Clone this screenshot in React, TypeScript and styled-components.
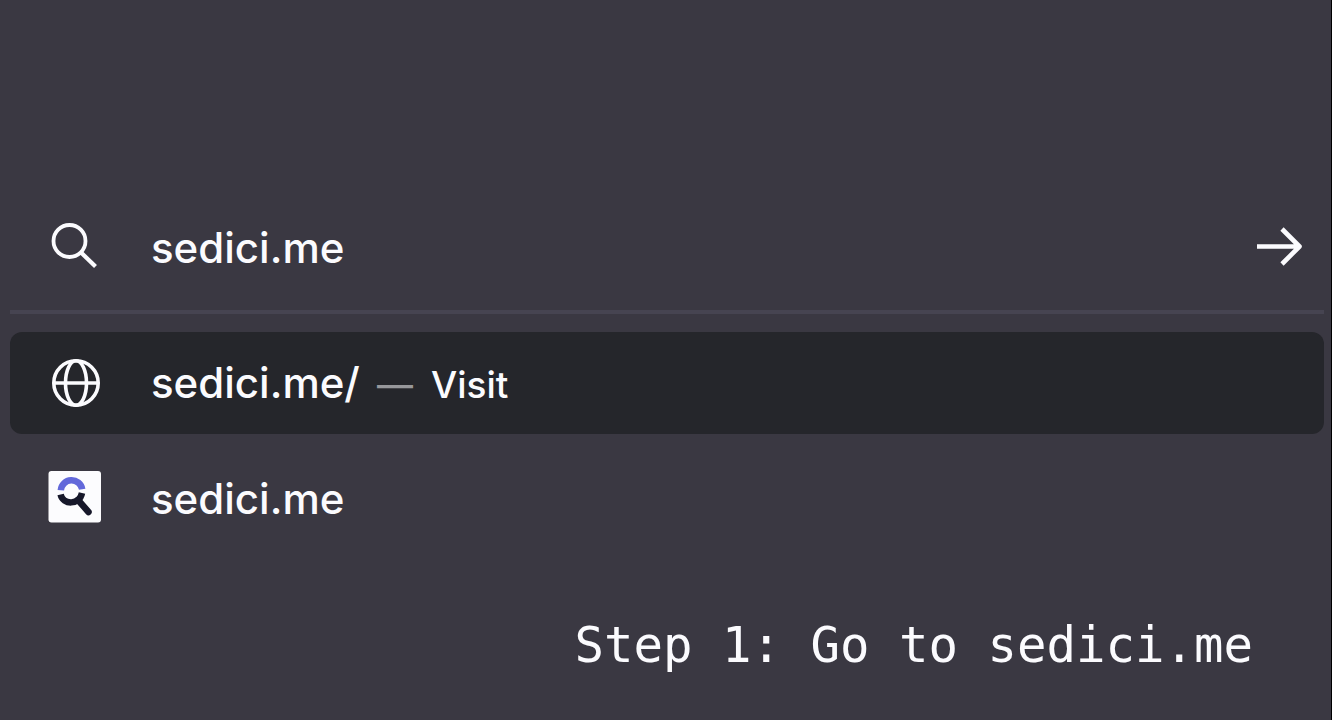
import React from "react";
import styled, { createGlobalStyle } from "styled-components";

const GlobalStyle = createGlobalStyle`
  * { box-sizing: border-box; }
  body { margin: 0; background: #3a3842; }
`;

const Page = styled.main`
  display: flex;
  flex-direction: column;
  min-height: 100vh;
  padding: 184px 7px 0 10px;
  border-right: 1px solid #000;
  background: #3a3842;
  color: #fbfbfe;
  font-family: Inter, "Liberation Sans", sans-serif;
`;

const SearchBar = styled.form`
  display: flex;
  align-items: center;
  height: 130px;
  padding: 0 20px 0 38px;
  border-bottom: 4px solid #464451;
`;

const IconSlot = styled.span`
  display: flex;
  flex: none;
  width: 103px;
`;

const Field = styled.input`
  flex: 1;
  min-width: 0;
  height: 60px;
  padding: 0;
  border: 0;
  outline: 0;
  background: transparent;
  color: inherit;
  font-family: inherit;
  font-size: 42px;
  font-weight: 500;
`;

const GoButton = styled.button`
  display: flex;
  padding: 0;
  border: 0;
  background: transparent;
  color: inherit;
`;

const Suggestions = styled.nav`
  display: flex;
  flex-direction: column;
  gap: 13px;
  padding-top: 18px;
`;

const Suggestion = styled.a<{ $active?: boolean }>`
  display: flex;
  align-items: center;
  height: 102px;
  padding: 0 38px;
  border-radius: 12px;
  background: ${(p) => (p.$active ? "#25262b" : "transparent")};
  color: inherit;
  text-decoration: none;
`;

const Label = styled.span`
  display: flex;
  align-items: baseline;
  padding-top: 2px;
  font-size: 42px;
  font-weight: 500;
  line-height: 60px;
`;

const Dash = styled.span`
  margin: 0 18px 0 17px;
  color: #97979b;
  font-size: 36px;
`;

const Action = styled.span`
  font-size: 37px;
`;

const Caption = styled.p`
  margin: 67px 71px 0 0;
  font-family: "DejaVu Sans Mono", monospace;
  font-size: 49px;
  line-height: 60px;
  text-align: right;
`;

const SearchIcon = () => (
  <svg width="54" height="54" viewBox="0 0 54 54" fill="none" stroke="currentColor" strokeWidth="3.800" aria-hidden="true">
    <circle cx="21.500" cy="21" r="16" />
    <path d="M33 32.500 47.500 46.500" strokeWidth="4.200" />
  </svg>
);

const ArrowIcon = () => (
  <svg width="50" height="50" viewBox="0 0 50 50" fill="none" stroke="currentColor" strokeWidth="4.600" aria-hidden="true">
    <path d="M3 24.500H46M28 7 45.500 24.500 28 42" strokeLinejoin="round" />
  </svg>
);

const GlobeIcon = () => (
  <svg width="54" height="54" viewBox="0 0 54 54" fill="none" stroke="currentColor" strokeWidth="3.600" aria-hidden="true">
    <circle cx="28" cy="27" r="22.200" />
    <ellipse cx="28" cy="27" rx="10.500" ry="22.200" />
    <path d="M6 27H50" />
  </svg>
);

const SiteIcon = () => (
  <svg width="54" height="54" viewBox="0 0 54 54" fill="none" aria-hidden="true">
    <rect x="0.500" y="0" width="52.500" height="51.500" rx="3" fill="#fcfcfe" />
    <path d="M12.800 19.200A10.800 10.800 0 0 1 34.200 18.200" stroke="#6268da" strokeWidth="6.500" />
    <path d="M12.600 23.500C15 34 31.500 34.500 34 22" stroke="#17182a" strokeWidth="6.500" />
    <path d="M30 29 40.500 41" stroke="#17182a" strokeWidth="6.500" strokeLinecap="round" />
  </svg>
);

export default function App() {
  return (
    <>
      <GlobalStyle />
      <Page>
        <SearchBar onSubmit={(e) => e.preventDefault()}>
          <IconSlot><SearchIcon /></IconSlot>
          <Field aria-label="Address" defaultValue="sedici.me" spellCheck={false} />
          <GoButton type="submit" aria-label="Go"><ArrowIcon /></GoButton>
        </SearchBar>
        <Suggestions aria-label="Suggestions">
          <Suggestion href="#visit" $active>
            <IconSlot><GlobeIcon /></IconSlot>
            <Label>sedici.me/<Dash>—</Dash><Action>Visit</Action></Label>
          </Suggestion>
          <Suggestion href="#site">
            <IconSlot><SiteIcon /></IconSlot>
            <Label>sedici.me</Label>
          </Suggestion>
        </Suggestions>
        <Caption>Step 1: Go to sedici.me</Caption>
      </Page>
    </>
  );
}
